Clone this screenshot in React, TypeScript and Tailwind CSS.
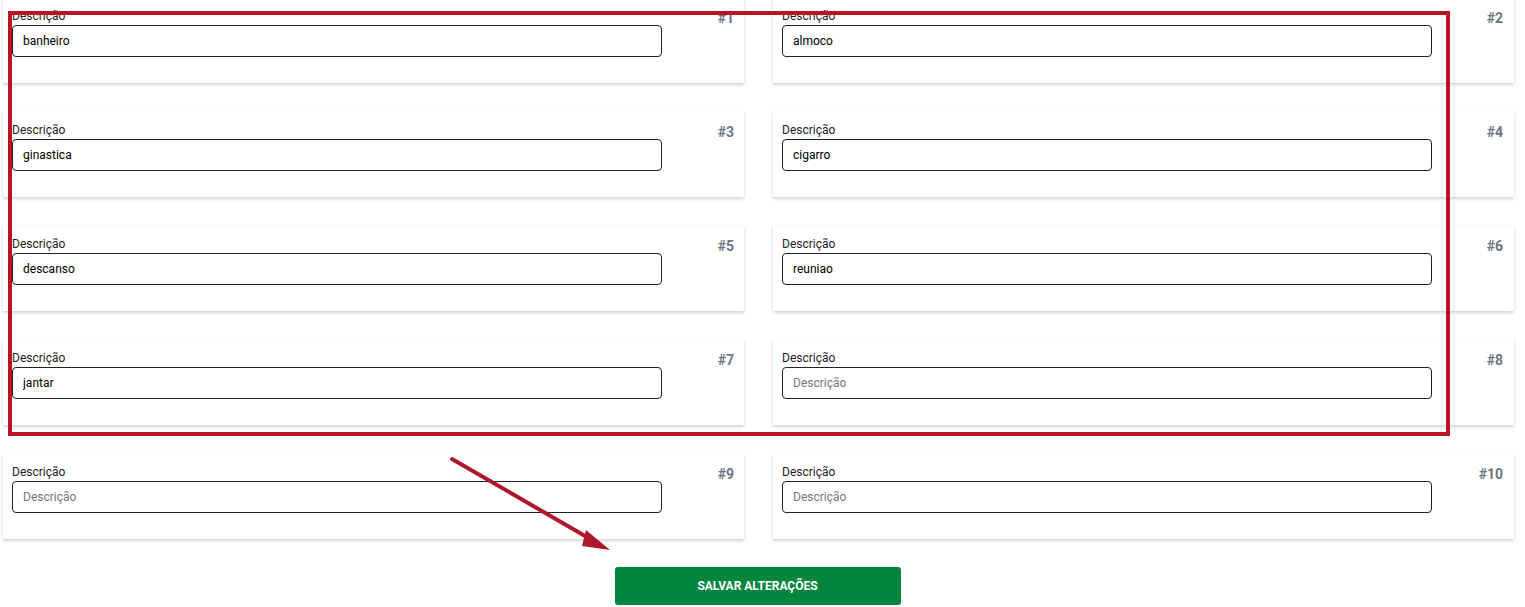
import React from "react";

const items = [
  "banheiro",
  "almoco",
  "ginastica",
  "cigarro",
  "descanso",
  "reuniao",
  "jantar",
  "",
  "",
  "",
];

function Card({ n, value, right }: { n: number; value: string; right: boolean }) {
  return (
    <div
      className={`h-[86px] bg-white shadow-[0_2px_3px_rgba(0,0,0,0.16),0_0_2px_rgba(0,0,0,0.05)] pt-[13px] flex justify-between ${
        right ? "pl-[9px] pr-[11px]" : "pl-[9px] pr-[10px]"
      }`}
    >
      <div className="w-[650px] flex flex-col">
        <label className="text-[12px] leading-[13px] mb-[2px] text-[#222]">Descrição</label>
        <input
          readOnly
          value={value}
          placeholder="Descrição"
          className="h-[32px] w-full border border-[#222] rounded-[4px] pl-[10px] text-[12px] text-black placeholder:text-[#777] outline-none bg-white"
        />
      </div>
      <div className="text-[14px] leading-[17px] font-bold text-[#6e7681]">#{n}</div>
    </div>
  );
}

export default function App() {
  return (
    <div
      className="relative w-[1525px] h-[607px] bg-white overflow-hidden"
      style={{ fontFamily: "Roboto, 'Liberation Sans', sans-serif" }}
    >
      <div className="w-[1512px] pl-[3px] -mt-[3px] flex flex-col items-center">
        <div className="grid grid-cols-[741px_741px] gap-x-[29px] gap-y-[28px] w-full">
          {items.map((v, i) => (
            <Card key={i} n={i + 1} value={v} right={i % 2 === 1} />
          ))}
        </div>
        <button className="mt-[28px] w-[286px] h-[38px] bg-[#02863e] rounded-[3px] text-white text-[12px] font-bold uppercase">
          Salvar alterações
        </button>
      </div>

      <div className="absolute left-[8px] top-[11px] w-[1442px] h-[425px] border-[4px] border-[#bb1326] pointer-events-none" />

      <svg
        className="absolute left-0 top-0 pointer-events-none"
        width="1525"
        height="607"
      >
        <line x1="452" y1="459" x2="592" y2="540" stroke="#b0162a" strokeWidth="4" strokeLinecap="round" />
        <polygon points="610,550 586,530 582,546" fill="#b0162a" />
      </svg>
    </div>
  );
}
